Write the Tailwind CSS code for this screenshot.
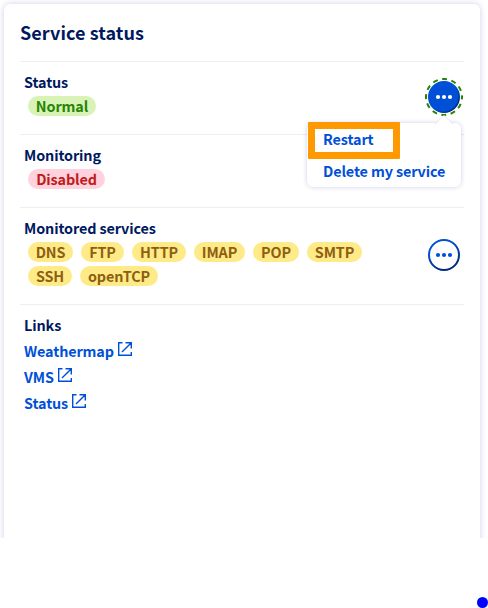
<!DOCTYPE html>
<html lang="en">
<head>
<meta charset="utf-8">
<title>Service status</title>
<script src="https://cdn.jsdelivr.net/npm/@tailwindcss/browser@4"></script>
</head>
<body class="bg-white w-[488px] h-[608px] overflow-hidden relative font-['Noto_Sans_CJK_SC','Noto_Sans',sans-serif] text-[14.4px] tracking-[-0.12px] leading-6 font-bold text-[#00185e]">
<main class="h-[538px] overflow-hidden pl-1 pt-1">
  <section class="w-[476px] h-[560px] rounded-md bg-white px-4 shadow-[0_0_6px_rgba(0,14,156,0.2)]">
    <h1 class="h-[57px] pt-4 text-[18px] tracking-[0.07px] leading-6 whitespace-nowrap"><span>Service status</span></h1>

    <div class="h-[73px] border-t border-[#eeeeee] pt-2 px-1 flex justify-between">
      <div>
        <div class="h-[26px]">Status</div>
        <div class="ml-1 w-[68px] h-5 leading-5 rounded-full bg-[#d9f2b6] text-[#268403] text-center">Normal</div>
      </div>
      <div class="relative w-8 h-8 mt-[11px]">
        <svg class="absolute -left-1 -top-1 w-10 h-10" viewBox="0 0 40 40">
          <defs><linearGradient id="ring" x1="0" y1="0" x2="1" y2="1"><stop offset=".5" stop-color="#0050d7"/><stop offset="1" stop-color="#00185e"/></linearGradient></defs>
          <circle cx="20" cy="20" r="18" fill="none" stroke="#268403" stroke-width="2" stroke-dasharray="5 4.425" stroke-dashoffset="-25.8"/>
          <circle cx="20" cy="20" r="15.2" fill="#0050d7" stroke="url(#ring)" stroke-width="1.6"/>
          <g fill="#fff"><circle cx="14" cy="20" r="2.1"/><circle cx="20" cy="20" r="2.1"/><circle cx="26" cy="20" r="2.1"/></g>
        </svg>
        <div class="absolute z-10 left-[-121px] top-[42px] w-[154px] h-16 rounded-md bg-white text-[#0050d7] shadow-[0_0_5px_rgba(0,14,156,0.2)]">
          <svg class="absolute left-[127px] -top-2 w-5 h-[9px]" viewBox="0 0 20 9"><path d="M1 9 L10 .5 L19 9" fill="#fff" stroke="#e4e4f6"/></svg>
          <div class="absolute left-px -top-px w-[92px] h-[37px] border-[7px] border-[#ff9900] rounded-[1px]"></div>
          <div class="relative pl-4 pt-1 whitespace-nowrap">
            <div class="h-8">Restart</div>
            <div class="h-6">Delete my service</div>
          </div>
        </div>
      </div>
    </div>

    <div class="h-[73px] border-t border-[#eeeeee] pt-2 px-1">
      <div class="h-[26px]">Monitoring</div>
      <div class="ml-1 w-[77px] h-5 leading-5 rounded-full bg-[#ffd2dd] text-[#c11b1b] text-center">Disabled</div>
    </div>

    <div class="h-[97px] border-t border-[#eeeeee] pt-2 px-1 flex justify-between">
      <div>
        <div class="h-[26px]">Monitored services</div>
        <div class="ml-1 flex flex-wrap gap-x-2 gap-y-1 w-[350px] leading-5 text-center text-[#8d5f10]">
          <span class="w-[45px] h-5 rounded-full bg-[#ffea88]">DNS</span>
          <span class="w-[43px] h-5 rounded-full bg-[#ffea88]">FTP</span>
          <span class="w-[54px] h-5 rounded-full bg-[#ffea88]">HTTP</span>
          <span class="w-[51px] h-5 rounded-full bg-[#ffea88]">IMAP</span>
          <span class="w-[46px] h-5 rounded-full bg-[#ffea88]">POP</span>
          <span class="w-[55px] h-5 rounded-full bg-[#ffea88]">SMTP</span>
          <span class="w-[44px] h-5 rounded-full bg-[#ffea88]">SSH</span>
          <span class="w-[78px] h-5 rounded-full bg-[#ffea88]">openTCP</span>
        </div>
      </div>
      <svg class="w-8 h-8 mt-[23px]" viewBox="0 0 32 32">
        <defs><linearGradient id="edge" x1="0" y1="0" x2=".5" y2="1"><stop offset=".3" stop-color="#0050d7"/><stop offset="1" stop-color="#002a80"/></linearGradient></defs>
        <circle cx="16" cy="16" r="15" fill="#fff" stroke="url(#edge)" stroke-width="2"/>
        <g fill="#0050d7"><circle cx="10" cy="16" r="2.1"/><circle cx="16" cy="16" r="2.1"/><circle cx="22" cy="16" r="2.1"/></g>
      </svg>
    </div>

    <div class="border-t border-[#eeeeee] pt-2 px-1">
      <div class="h-[26px]">Links</div>
      <div class="text-[#0050d7]">
        <div class="h-[26px] flex gap-[3px]"><span>Weathermap</span><svg class="w-4 h-4 mt-0.5" viewBox="0 0 16 16" fill="none" stroke="currentColor" stroke-width="1.4"><path d="M5.5 1.7H1.7V14.3H14.3V11M8.5 1.7H14.3V7.5M14.3 1.7L5 11"/></svg></div>
        <div class="h-[26px] flex gap-[3px]"><span>VMS</span><svg class="w-4 h-4 mt-0.5" viewBox="0 0 16 16" fill="none" stroke="currentColor" stroke-width="1.4"><path d="M5.5 1.7H1.7V14.3H14.3V11M8.5 1.7H14.3V7.5M14.3 1.7L5 11"/></svg></div>
        <div class="h-[26px] flex gap-[3px]"><span>Status</span><svg class="w-4 h-4 mt-0.5" viewBox="0 0 16 16" fill="none" stroke="currentColor" stroke-width="1.4"><path d="M5.5 1.7H1.7V14.3H14.3V11M8.5 1.7H14.3V7.5M14.3 1.7L5 11"/></svg></div>
      </div>
    </div>
  </section>
</main>
<div class="absolute left-[477px] top-[597px] w-[11px] h-[11px] rounded-full bg-[#0000ff]"></div>
</body>
</html>
